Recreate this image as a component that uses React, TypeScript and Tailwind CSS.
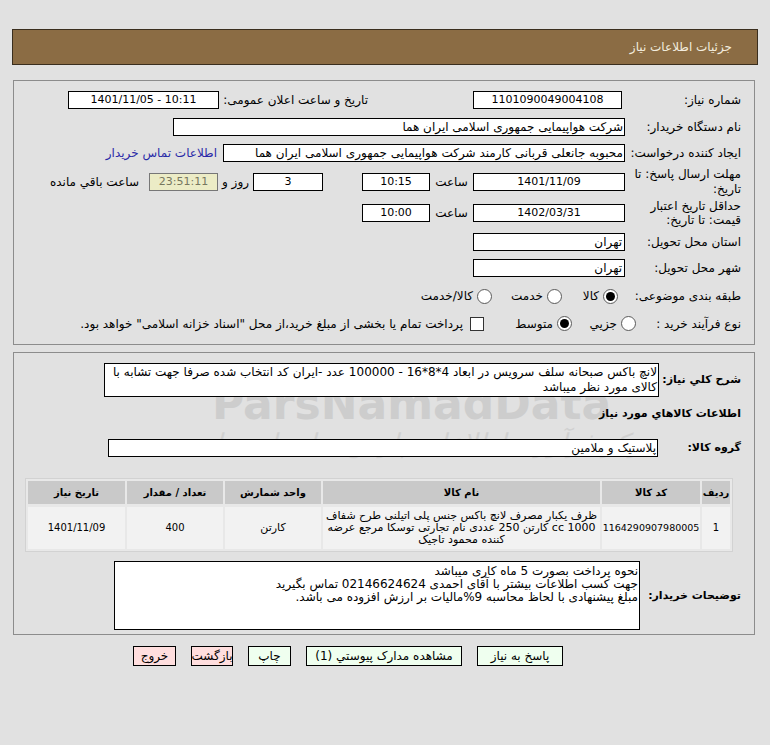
import React from "react";

function Radio({ checked }: { checked?: boolean }) {
  return (
    <span className="inline-flex items-center justify-center w-[15px] h-[15px] rounded-full border border-[#5a5a5a] bg-white shrink-0">
      {checked ? <span className="w-[9px] h-[9px] rounded-full bg-black" /> : null}
    </span>
  );
}

export default function App() {
  return (
    <div
      dir="rtl"
      className="relative w-[770px] min-h-[745px] bg-[#e1e1e1] pt-[29px] px-[12px] text-[12px] leading-[14px] text-black font-['DejaVu_Sans',sans-serif] overflow-hidden"
    >
      {/* watermark overlay (behind content) */}
      <div className="pointer-events-none absolute left-[212px] top-[382px] text-[44px] leading-[44px] font-bold text-[#a0a0a0] opacity-30" dir="ltr">
        ParsNamadData
      </div>
      <div className="pointer-events-none absolute left-[215px] top-[428px] text-[26px] leading-[30px] italic text-[#a0a0a0] opacity-25 whitespace-nowrap">
        مرکز فرآوری اطلاعات پارس نماد داده ها
      </div>

      {/* header */}
      <div className="relative h-[36px] bg-[#8b6c44] border border-[#3a2e1e] flex items-center pr-[25px] text-[12px] text-[#f3ecdf]">
        جزئیات اطلاعات نیاز
      </div>

      {/* panel 1 */}
      <div className="relative mt-[15px] mr-[3px] ml-[1px] border border-[#8c8c8c] pt-[5px] pb-[10px] pr-[13px]">
        {/* row 1 */}
        <div className="h-[27px] flex items-center">
          <div className="w-[114px] shrink-0">شماره نیاز:</div>
          <div dir="ltr" className="mr-[5px] w-[149px] h-[18px] bg-white border border-black flex items-center justify-center text-[11px]">
            1101090049004108
          </div>
          <div className="mr-[105px] w-[149px] shrink-0 whitespace-nowrap">تاریخ و ساعت اعلان عمومی:</div>
          <div dir="ltr" className="w-[151px] h-[18px] bg-white border border-black flex items-center justify-center text-[11px]">
            1401/11/05 - 10:11
          </div>
        </div>
        {/* row 2 */}
        <div className="h-[27px] flex items-center">
          <div className="w-[114px] shrink-0">نام دستگاه خریدار:</div>
          <div className="mr-[2px] w-[452px] h-[18px] bg-white border border-black flex items-center pr-[1px]">
            شرکت هواپیمایی جمهوری اسلامی ایران هما
          </div>
        </div>
        {/* row 3 */}
        <div className="h-[25px] flex items-center">
          <div className="w-[114px] shrink-0 whitespace-nowrap">ایجاد کننده درخواست:</div>
          <div className="mr-[2px] w-[402px] h-[18px] bg-white border border-black flex items-center pr-[1px] whitespace-nowrap overflow-hidden">
            محبوبه جانعلی قربانی کارمند شرکت هواپیمایی جمهوری اسلامی ایران هما
          </div>
          <div className="mr-[6px] text-[#2a2aa8] whitespace-nowrap">اطلاعات تماس خریدار</div>
        </div>
        {/* row 4 */}
        <div className="h-[33px] flex items-center">
          <div className="w-[114px] shrink-0 leading-[15px] whitespace-nowrap">
            مهلت ارسال پاسخ: تا
            <br />
            تاریخ:
          </div>
          <div dir="ltr" className="mr-[2px] w-[152px] h-[18px] bg-white border border-black flex items-center justify-center text-[11px]">
            1401/11/09
          </div>
          <div className="w-[43px] text-center">ساعت</div>
          <div dir="ltr" className="w-[68px] h-[18px] bg-white border border-black flex items-center justify-center text-[11px]">
            10:15
          </div>
          <div dir="ltr" className="mr-[39px] w-[70px] h-[18px] bg-white border border-black flex items-center justify-center text-[11px]">
            3
          </div>
          <div className="w-[35px] text-center whitespace-nowrap">روز و</div>
          <div dir="ltr" className="w-[69px] h-[18px] bg-[#ececc6] border border-[#777] text-[#77775e] flex items-center justify-center text-[11px]">
            23:51:11
          </div>
          <div className="mr-[10px] whitespace-nowrap">ساعت باقي مانده</div>
        </div>
        {/* row 5 */}
        <div className="h-[29px] flex items-center">
          <div className="w-[114px] shrink-0 leading-[14px] whitespace-nowrap">
            حداقل تاریخ اعتبار
            <br />
            قیمت: تا تاریخ:
          </div>
          <div dir="ltr" className="mr-[2px] w-[152px] h-[18px] bg-white border border-black flex items-center justify-center text-[11px]">
            1402/03/31
          </div>
          <div className="w-[43px] text-center">ساعت</div>
          <div dir="ltr" className="w-[68px] h-[18px] bg-white border border-black flex items-center justify-center text-[11px]">
            10:00
          </div>
        </div>
        {/* row 6 */}
        <div className="h-[29px] flex items-center">
          <div className="w-[114px] shrink-0">استان محل تحویل:</div>
          <div className="mr-[2px] w-[152px] h-[18px] bg-white border border-black flex items-center pr-[2px]">
            تهران
          </div>
        </div>
        {/* row 7 */}
        <div className="h-[23px] flex items-center">
          <div className="w-[114px] shrink-0">شهر محل تحویل:</div>
          <div className="mr-[2px] w-[152px] h-[18px] bg-white border border-black flex items-center pr-[2px]">
            تهران
          </div>
        </div>
        {/* row 8 */}
        <div className="h-[34px] flex items-center">
          <div className="w-[114px] shrink-0 whitespace-nowrap">طبقه بندی موضوعی:</div>
          <div className="mr-[9px] w-[56px] flex items-center gap-[4px]">
            <Radio checked />
            <span>کالا</span>
          </div>
          <div className="w-[70px] flex items-center gap-[4px]">
            <Radio />
            <span>خدمت</span>
          </div>
          <div className="flex items-center gap-[4px]">
            <Radio />
            <span>کالا/خدمت</span>
          </div>
        </div>
        {/* row 9 */}
        <div className="h-[21px] flex items-center">
          <div className="w-[105px] shrink-0 whitespace-nowrap">نوع فرآیند خرید :</div>
          <div className="w-[64px] flex items-center gap-[4px]">
            <Radio />
            <span>جزیي</span>
          </div>
          <div className="w-[88px] flex items-center gap-[4px]">
            <Radio checked />
            <span>متوسط</span>
          </div>
          <span className="w-[14px] h-[14px] bg-white border border-[#333] shrink-0" />
          <div className="mr-[7px] whitespace-nowrap">
            پرداخت تمام یا بخشی از مبلغ خرید،از محل "اسناد خزانه اسلامی" خواهد بود.
          </div>
        </div>
      </div>

      {/* panel 2 */}
      <div className="relative mt-[7px] mr-[3px] ml-[1px] border border-[#8c8c8c] pt-[10px] pb-[4px] pr-[13px]">
        <div className="flex items-center">
          <div className="w-[82px] shrink-0 font-bold text-[11px] whitespace-nowrap">شرح کلي نیاز:</div>
          <div className="w-[555px] h-[34px] bg-white border border-black pr-[1px] pt-[1px] leading-[15px] overflow-hidden whitespace-nowrap">
            لانچ باکس صبحانه سلف سرویس در ابعاد 4*8*16 - 100000 عدد -ایران کد انتخاب شده صرفا جهت تشابه با
            <br />
            کالای مورد نظر میباشد
          </div>
        </div>
        <div className="h-[33px] flex items-center font-bold text-[11px]">اطلاعات کالاهاي مورد نیاز</div>
        <div className="mt-[9px] flex items-center">
          <div className="w-[83px] shrink-0 font-bold text-[11px] whitespace-nowrap">گروه کالا:</div>
          <div className="w-[550px] h-[18px] bg-white border border-black flex items-center pr-[1px]">
            پلاستیک و ملامین
          </div>
        </div>

        {/* table */}
        <div className="mt-[21px] mr-[8px] w-[708px] border border-[#d2d2d2] bg-[#e8e8e8] p-[2px] grid grid-cols-[28px_98px_277px_96px_96px_97px] gap-x-[2px] gap-y-[3px] text-[11px]">
          <div className="h-[23px] bg-[#c9c9c9] flex items-center justify-center font-bold text-[10px] whitespace-nowrap">ردیف</div>
          <div className="h-[23px] bg-[#c9c9c9] flex items-center justify-center font-bold text-[10px]">کد کالا</div>
          <div className="h-[23px] bg-[#c9c9c9] flex items-center justify-center font-bold text-[10px]">نام کالا</div>
          <div className="h-[23px] bg-[#c9c9c9] flex items-center justify-center font-bold text-[10px]">واحد شمارش</div>
          <div className="h-[23px] bg-[#c9c9c9] flex items-center justify-center font-bold text-[10px]">تعداد / مقدار</div>
          <div className="h-[23px] bg-[#c9c9c9] flex items-center justify-center font-bold text-[10px]">تاریخ نیاز</div>

          <div className="h-[42px] bg-[#f2f2f2] flex items-center justify-center text-[10px]">1</div>
          <div className="h-[42px] bg-[#f2f2f2] flex items-center justify-center text-[9.5px]">1164290907980005</div>
          <div className="h-[42px] bg-[#f2f2f2] flex items-center justify-center text-center leading-[12px] px-[2px]">
            ظرف یکبار مصرف لانچ باکس جنس پلی اتیلنی طرح شفاف 1000 cc کارتن 250 عددی نام تجارتی توسکا مرجع عرضه کننده محمود تاجیک
          </div>
          <div className="h-[42px] bg-[#f2f2f2] flex items-center justify-center">کارتن</div>
          <div className="h-[42px] bg-[#f2f2f2] flex items-center justify-center text-[10px]">400</div>
          <div className="h-[42px] bg-[#f2f2f2] flex items-center justify-center text-[10px]">1401/11/09</div>
        </div>

        <div className="mt-[9px] flex items-center">
          <div className="w-[101px] shrink-0 font-bold text-[11px] whitespace-nowrap">توضیحات خریدار:</div>
          <div className="w-[526px] h-[69px] bg-white border border-black pr-[1px] pt-[3px] leading-[13px] text-[12px] whitespace-nowrap">
            نحوه پرداخت بصورت 5 ماه کاری میباشد
            <br />
            جهت کسب اطلاعات بیشتر با آقای  احمدی 02146624624 تماس بگیرید
            <br />
            مبلغ پیشنهادی با لحاظ محاسبه 9%مالیات بر ارزش افزوده می باشد.
          </div>
        </div>
      </div>

      {/* buttons */}
      <div className="relative mt-[11px] mr-[195px] flex items-center gap-[15px] text-[12px]">
        <div className="w-[86px] h-[20px] bg-[#efffef] border border-black flex items-center justify-center">پاسخ به نیاز</div>
        <div className="w-[156px] h-[20px] bg-[#efffef] border border-black flex items-center justify-center">مشاهده مدارک پیوستي (1)</div>
        <div className="w-[43px] h-[20px] bg-[#efffef] border border-black flex items-center justify-center">چاپ</div>
        <div className="w-[42px] h-[20px] bg-[#ffdede] border border-black flex items-center justify-center">بازگشت</div>
        <div className="w-[43px] h-[20px] bg-[#ffdede] border border-black flex items-center justify-center">خروج</div>
      </div>
    </div>
  );
}
